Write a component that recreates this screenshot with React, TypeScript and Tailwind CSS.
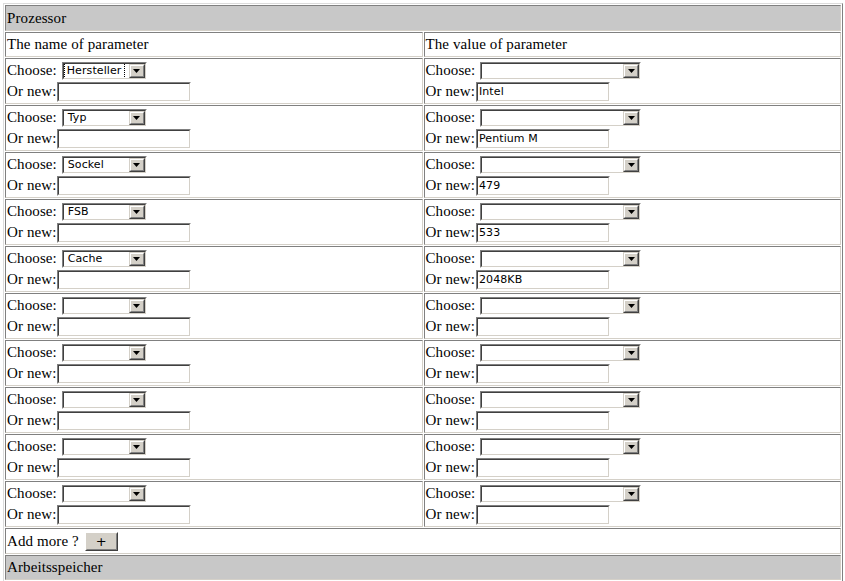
import React from 'react';

const serif = { fontFamily: '"Liberation Serif", "Times New Roman", serif' };
const sans = { fontFamily: '"DejaVu Sans", Tahoma, sans-serif' };

// classic windows 2px sunken border
const Sunken: React.FC<{ w: string; h: string; children?: React.ReactNode }> = ({ w, h, children }) => (
  <div className={`${w} ${h} ml-[1px] border border-t-[#808080] border-l-[#808080] border-b-white border-r-white`}>
    <div className="w-full h-full border border-t-[#404040] border-l-[#404040] border-b-[#d4d0c8] border-r-[#d4d0c8] bg-white flex items-center">
      {children}
    </div>
  </div>
);

const DropArrow = () => (
  <div className="h-full w-[16px] shrink-0 border border-t-[#d4d0c8] border-l-[#d4d0c8] border-b-[#404040] border-r-[#404040]">
    <div className="w-full h-full bg-[#d4d0c8] border border-t-white border-l-white border-b-[#808080] border-r-[#808080] flex items-center justify-center">
      <svg width="7" height="4" viewBox="0 0 7 4">
        <path d="M0 0h7L3.5 4z" fill="#000" />
      </svg>
    </div>
  </div>
);

const Select: React.FC<{ w: string; value?: string; focused?: boolean }> = ({ w, value, focused }) => (
  <Sunken w={w} h="h-[18px]">
    <div className="flex-1 h-full flex items-center pl-[1px] overflow-hidden">
      {value && (
        <span
          className={`text-[11px] leading-[12px] text-black px-[2px] py-[1px] whitespace-nowrap ${focused ? 'outline-1 outline-dotted outline-black' : 'pl-[3px]'}`}
          style={sans}
        >
          {value}
        </span>
      )}
    </div>
    <DropArrow />
  </Sunken>
);

const TextInput: React.FC<{ value?: string }> = ({ value }) => (
  <Sunken w="w-[134px]" h="h-[20px]">
    <span className="pl-[1px] text-[11px] leading-[14px] text-black whitespace-nowrap" style={sans}>
      {value}
    </span>
  </Sunken>
);

const cell = 'bg-white border border-t-[#808080] border-l-[#808080] border-b-[#d4d0c8] border-r-[#d4d0c8] p-[1px]';

const ParamCell: React.FC<{ selWidth: string; selValue?: string; focused?: boolean; inputValue?: string }> = ({
  selWidth,
  selValue,
  focused,
  inputValue,
}) => (
  <div className={cell}>
    <div className="flex items-center h-[21px] whitespace-pre">
      <span>Choose: </span>
      <Select w={selWidth} value={selValue} focused={focused} />
    </div>
    <div className="flex items-center h-[21px]">
      <span>Or new:</span>
      <TextInput value={inputValue} />
    </div>
  </div>
);

const rows = [
  { name: 'Hersteller', value: 'Intel' },
  { name: 'Typ', value: 'Pentium M' },
  { name: 'Sockel', value: '479' },
  { name: 'FSB', value: '533' },
  { name: 'Cache', value: '2048KB' },
  { name: '', value: '' },
  { name: '', value: '' },
  { name: '', value: '' },
  { name: '', value: '' },
  { name: '', value: '' },
];

export default function App() {
  return (
    <div
      className="w-[845px] h-[581px] bg-white overflow-hidden pl-[3px] pt-[3px] text-black text-[15px] tracking-[0.1px]"
      style={serif}
    >
      <div className="w-[840px] border border-t-[#dcdcdc] border-l-[#dcdcdc] border-b-[#808080] border-r-[#808080] p-[1px]">
        <div className="grid grid-cols-2 gap-[1px]">
          <div className={`${cell} col-span-2 h-[26px] !bg-[#c8c8c8] flex items-center`}>Prozessor</div>
          <div className={`${cell} h-[25px] flex items-center`}>The name of parameter</div>
          <div className={`${cell} h-[25px] flex items-center`}>The value of parameter</div>
          {rows.map((r, i) => (
            <React.Fragment key={i}>
              <ParamCell selWidth="w-[85px]" selValue={r.name} focused={i === 0} />
              <ParamCell selWidth="w-[161px]" inputValue={r.value} />
            </React.Fragment>
          ))}
          <div className={`${cell} col-span-2 h-[26px] flex items-center whitespace-pre`}>
            <span>Add more ? </span>
            <div className="ml-[2px] w-[33px] h-[19px] border border-t-white border-l-white border-b-[#404040] border-r-[#404040]">
              <div
                className="w-full h-full bg-[#d4d0c8] border border-t-[#d4d0c8] border-l-[#d4d0c8] border-b-[#808080] border-r-[#808080] flex items-center justify-center text-[13px] leading-none"
                style={sans}
              >
                +
              </div>
            </div>
          </div>
          <div className={`${cell} col-span-2 h-[25px] !bg-[#c8c8c8] flex items-center`}>Arbeitsspeicher</div>
        </div>
      </div>
    </div>
  );
}
